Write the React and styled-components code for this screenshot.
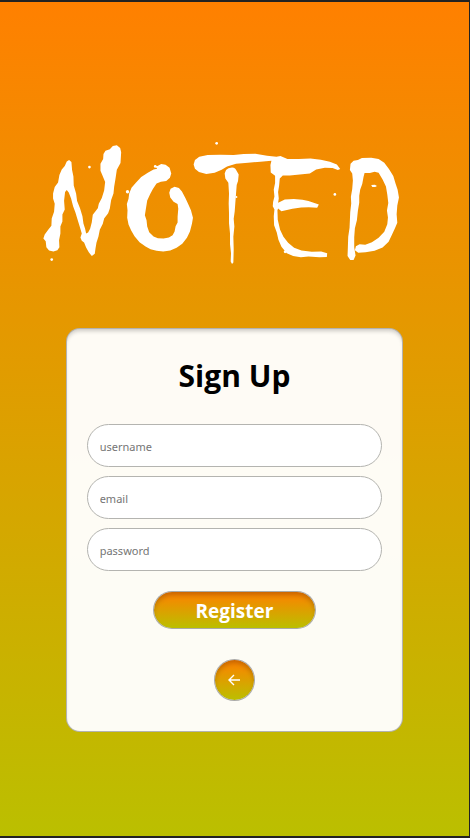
import React from "react";
import styled, { createGlobalStyle } from "styled-components";

const GlobalStyle = createGlobalStyle`
  *, *::before, *::after { box-sizing: border-box; }
  body {
    margin: 0;
    font-family: "Noto Sans", "Open Sans", sans-serif;
  }
`;

const sunset = "linear-gradient(to bottom, #ff8000, #bbbf00)";

const Page = styled.main`
  min-height: 100vh;
  display: flex;
  flex-direction: column;
  align-items: center;
  border: solid #222222;
  border-width: 2px 1px 2px 0;
  background: ${sunset};
`;

const Logo = styled.svg`
  display: block;
  width: 88%;
  max-width: 600px;
  margin: 128px 0 58px;
  fill: #ffffff;
`;

const Card = styled.form`
  width: 72%;
  max-width: 480px;
  display: flex;
  flex-direction: column;
  align-items: center;
  padding: 24px 20px 30px;
  border: 1px solid rgba(130, 130, 130, 0.6);
  border-radius: 14px;
  background: rgba(255, 255, 255, 0.96);
  box-shadow: inset 0 4px 4px -2px rgba(0, 0, 0, 0.2);
`;

const Title = styled.h1`
  margin: 0 0 26px;
  font-family: "Open Sans", "Noto Sans", sans-serif;
  font-size: 30px;
  line-height: 45px;
  font-weight: 700;
  color: #000000;
`;

const Fields = styled.div`
  width: 100%;
  display: grid;
  gap: 9px;
`;

const Field = styled.input`
  width: 100%;
  height: 43px;
  padding: 1px 12px 0;
  border: 1px solid #b4b4b0;
  border-radius: 22px;
  background: #ffffff;
  font-family: "Noto Sans", "Open Sans", sans-serif;
  font-size: 11px;
  color: #222222;
  &::placeholder { color: #757575; opacity: 1; }
`;

const Button = styled.button`
  display: flex;
  align-items: center;
  justify-content: center;
  padding: 0;
  border: 1px solid rgba(150, 150, 150, 0.8);
  border-radius: 21px;
  background: ${sunset};
  background-clip: padding-box;
  box-shadow: inset 0 4px 5px -1px rgba(0, 0, 0, 0.22);
  color: #ffffff;
  cursor: pointer;
`;

const RegisterButton = styled(Button)`
  width: 55%;
  height: 38px;
  margin-top: 20px;
  padding-top: 2px;
  font-family: "Open Sans", "Noto Sans", sans-serif;
  font-size: 19px;
  line-height: 24px;
  font-weight: 700;
`;

const BackButton = styled(Button)`
  width: 41px;
  height: 42px;
  margin-top: 30px;
`;

const fields = [
  { name: "username", type: "text" },
  { name: "email", type: "email" },
  { name: "password", type: "password" },
];

function NotedLogo() {
  return (
    <Logo viewBox="-6 0 1236 420" role="img" aria-label="Noted">
      <path d="M117 90 L110 94 L104 108 L95 118 L88 135 L84 157 L74 171 L69 190 L69 205 L74 221 L72 245 L65 265 L64 287 L55 298 L44 313 L40 325 L47 333 L49 351 L57 361 L70 364 L82 360 L88 351 L87 330 L91 310 L91 289 L97 274 L97 253 L104 238 L102 212 L105 186 L110 180 L116 187 L123 205 L129 228 L136 247 L143 270 L149 290 L155 310 L151 322 L155 332 L162 337 L168 352 L176 366 L185 377 L194 371 L196 356 L199 338 L205 319 L209 299 L218 281 L222 265 L234 249 L239 235 L243 210 L250 190 L252 170 L256 146 L260 119 L271 99 L273 67 L270 54 L260 46 L248 48 L239 58 L226 62 L220 72 L219 87 L211 101 L211 122 L217 136 L225 156 L222 181 L215 204 L206 221 L203 234 L188 254 L185 276 L180 296 L174 307 L168 310 L165 296 L160 280 L157 258 L150 235 L141 213 L138 190 L131 166 L130 139 L126 120 L124 96 Z" />
      <circle cx="178" cy="111" r="4" />
      <circle cx="292" cy="185" r="5" />
      <circle cx="65" cy="388" r="4" />
      <g transform="translate(255 0)">
        <path d="M119 108 L126 116 L115 118 L99 127 L78 141 L62 158 L49 173 L42 190 L40 206 L35 222 L37 240 L36 263 L40 283 L48 301 L58 318 L73 336 L91 349 L106 357 L124 362 L144 364 L165 361 L184 353 L201 341 L215 323 L224 304 L230 281 L233 263 L227 240 L218 220 L211 205 L200 184 L191 174 L178 170 L166 176 L162 188 L165 202 L175 215 L187 222 L189 236 L187 260 L187 277 L181 288 L178 304 L172 315 L161 322 L145 325 L128 324 L115 319 L102 306 L96 289 L94 270 L89 255 L93 230 L96 211 L105 192 L113 177 L124 160 L137 155 L153 153 L164 143 L168 130 L163 113 L151 104 L138 102 L127 108 Z" />
        <circle cx="120" cy="109" r="4" />
        <circle cx="304" cy="40" r="4" />
      </g>
      <g transform="translate(570 0)">
        <path d="M-80 103 L-76 90 L-63 80 L-38 75 L0 74 L40 75 L70 72 L105 71 L140 77 L168 80 L180 78 L201 87 L235 87 L270 85 L301 89 L328 95 L349 103 L359 117 L352 120 L336 114 L313 113 L287 118 L268 130 L238 133 L208 136 L187 136 L178 145 L176 167 L173 186 L175 205 L173 218 L181 214 L193 208 L220 207 L246 209 L264 213 L295 223 L290 233 L265 231 L242 232 L216 236 L183 243 L173 235 L171 240 L172 269 L179 299 L189 320 L203 338 L221 353 L243 361 L274 365 L302 364 L320 369 L319 380 L297 381 L264 379 L241 381 L218 377 L199 369 L183 350 L174 329 L169 307 L161 285 L160 258 L162 238 L157 228 L158 216 L162 199 L160 178 L164 159 L164 137 L151 127 L150 105 L153 92 L120 95 L83 98 L47 101 L20 109 L4 119 L-17 128 L-42 132 L-64 126 L-76 116 Z" />
        <path d="M17 120 Q23 112 35 112 Q46 113 49 123 L55 133 L53 153 L49 165 L47 191 L45 217 L43 244 L40 266 L42 289 L39 320 L40 357 L39 397 L35 401 L31 394 L32 369 L29 342 L29 310 L26 279 L26 250 L25 220 L26 190 L24 158 L15 145 L13 130 Z" />
        <path d="M390 101 L399 92 L412 90 L424 84 L452 83 L474 87 L491 98 L505 117 L518 138 L525 161 L531 179 L535 202 L530 226 L528 252 L530 278 L523 294 L514 314 L504 335 L486 352 L462 362 L435 366 L413 368 L403 360 L406 348 L417 342 L434 344 L454 336 L474 323 L491 305 L500 282 L502 262 L499 241 L503 219 L500 193 L496 169 L486 148 L474 128 L462 125 L448 129 L432 129 L429 140 L425 162 L419 178 L416 197 L416 218 L412 242 L409 270 L403 294 L401 321 L401 351 L405 376 L399 389 L389 389 L381 377 L382 350 L383 320 L387 293 L388 270 L389 246 L392 220 L391 200 L395 177 L397 151 L395 130 L388 120 Z" />
        <path d="M452 165 L463 164 L469 168 L464 171 L455 171 Z" />
        <circle cx="343" cy="193" r="4" />
        <circle cx="194" cy="365" r="4" />
        <circle cx="48" cy="201" r="3" />
      </g>
    </Logo>
  );
}

export default function App() {
  return (
    <>
      <GlobalStyle />
      <Page>
        <NotedLogo />
        <Card onSubmit={(event) => event.preventDefault()}>
          <Title>Sign Up</Title>
          <Fields>
            {fields.map(({ name, type }) => (
              <Field key={name} name={name} type={type} placeholder={name} aria-label={name} />
            ))}
          </Fields>
          <RegisterButton type="submit">Register</RegisterButton>
          <BackButton type="button" aria-label="Back">
            <svg width="16" height="16" viewBox="0 0 16 16" fill="none" stroke="currentColor" strokeWidth="1.4" aria-hidden="true">
              <path d="M14 8H3M8 3L3 8l5 5" />
            </svg>
          </BackButton>
        </Card>
      </Page>
    </>
  );
}
